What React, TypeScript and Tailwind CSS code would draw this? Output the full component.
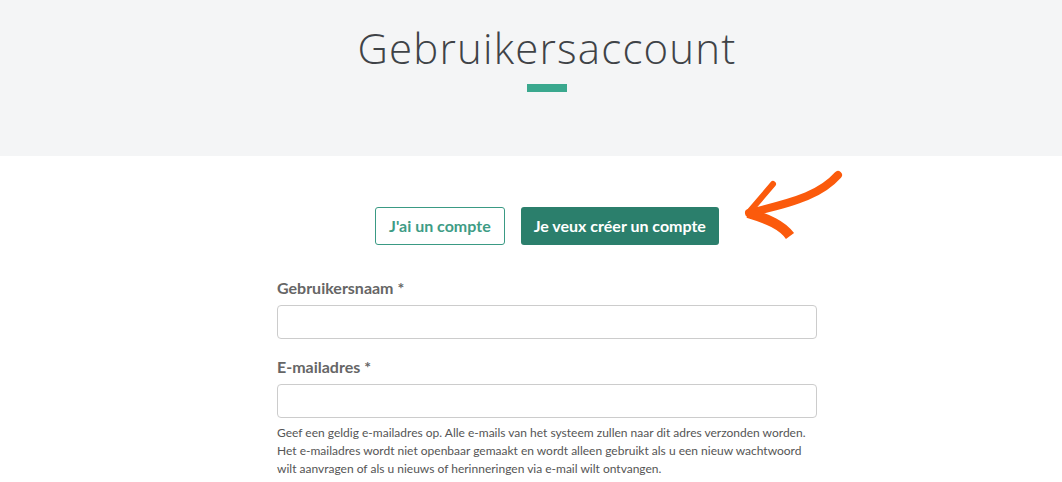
export default function App() {
  return (
    <div className="relative h-[482px] w-full overflow-hidden bg-white" style={{ fontFamily: "Lato, 'Open Sans', sans-serif" }}>
      <header className="h-[156px] bg-[#f4f5f6] flex flex-col items-center pt-[22px] pl-[32px]">
        <h1 className="text-[42px] leading-[52px] font-light text-[#3f4347] tracking-[1.2px]" style={{ fontFamily: "'Open Sans', Lato, sans-serif" }}>
          Gebruikersaccount
        </h1>
        <div className="mt-[10px] h-[8px] w-[40px] bg-[#3aa88e]" />
      </header>

      <div className="flex justify-center gap-4 pt-[51px] pl-[32px]">
        <button className="h-[38px] px-[13px] rounded-[3px] border border-[#3a9a84] bg-white text-[16px] font-bold text-[#3e9c85]">
          J'ai un compte
        </button>
        <button className="h-[38px] px-[13px] rounded-[3px] bg-[#2b7f6c] text-[16px] font-bold text-white">
          Je veux créer un compte
        </button>
      </div>

      {/* hand-drawn arrow pointing at the active button */}
      <svg className="absolute left-[740px] top-[165px]" width="110" height="80" viewBox="0 0 110 80">
        <path d="M98 10 C 82 28, 60 36, 9 48" fill="none" stroke="#fb5a0c" strokeWidth="8" strokeLinecap="round" />
        <path d="M33 19 L 10 46" fill="none" stroke="#fb5a0c" strokeWidth="6" strokeLinecap="round" />
        <path d="M8 48 C 28 54, 42 60, 50 71" fill="none" stroke="#fb5a0c" strokeWidth="10" strokeLinecap="butt" />
      </svg>

      <div className="pl-[32px]">
        <form className="mx-auto w-[540px] pt-[34px] text-[#666]">
          <label className="block text-[16px] font-bold leading-[18px]">Gebruikersnaam *</label>
          <input className="mt-[8px] block h-[34px] w-full rounded-[4px] border border-[#ccc] bg-white" />
          <label className="mt-[19px] block text-[16px] font-bold leading-[18px]">E-mailadres *</label>
          <input className="mt-[8px] block h-[34px] w-full rounded-[4px] border border-[#ccc] bg-white" />
          <p className="mt-[6px] text-[12px] leading-[18px] text-[#555]">
            Geef een geldig e-mailadres op. Alle e-mails van het systeem zullen naar dit adres verzonden worden.
            <br />
            Het e-mailadres wordt niet openbaar gemaakt en wordt alleen gebruikt als u een nieuw wachtwoord
            <br />
            wilt aanvragen of als u nieuws of herinneringen via e-mail wilt ontvangen.
          </p>
        </form>
      </div>
    </div>
  );
}
